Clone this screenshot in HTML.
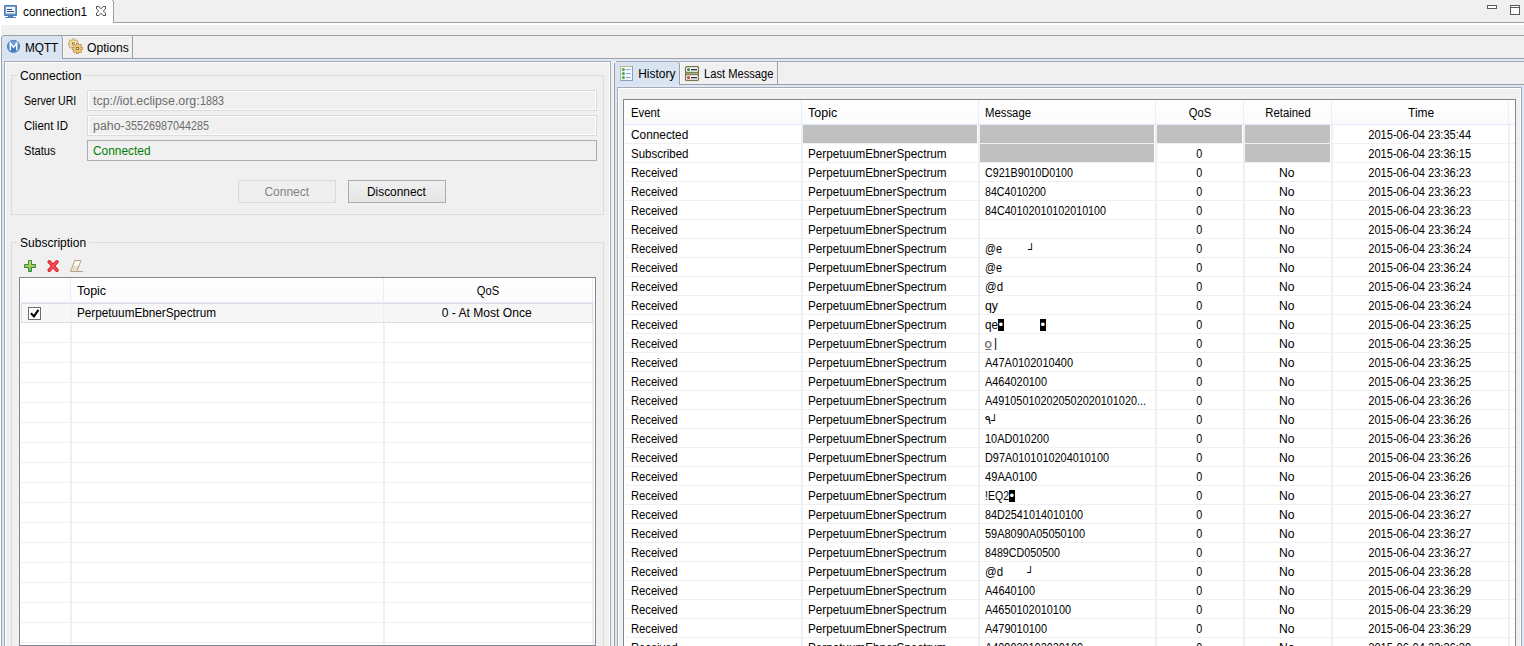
<!DOCTYPE html>
<html><head><meta charset="utf-8"><title>connection1</title>
<style>
html,body{margin:0;padding:0}
body{width:1524px;height:646px;overflow:hidden;background:#f0f0f0;position:relative;font-family:"Liberation Sans", sans-serif;font-size:12px;color:#000}
#root{position:absolute;left:0;top:0;width:1524px;height:646px;overflow:hidden}
#root div{position:absolute;box-sizing:border-box}
#root svg{position:absolute}
.t{position:absolute;white-space:pre;line-height:14px;display:inline-block}
</style></head><body><div id="root">
<div style="left:0px;top:0px;width:113px;height:25px;background:#fff"></div>
<div style="left:112px;top:0px;width:1px;height:1px;background:#f0f0f0"></div>
<div style="left:0px;top:23px;width:1524px;height:2px;background:#fff"></div>
<div style="left:113px;top:1px;width:1px;height:22px;background:#a0a0a0"></div>
<div style="left:112px;top:0px;width:1px;height:1px;background:#a0a0a0"></div>
<div style="left:113px;top:22px;width:1411px;height:1px;background:#a0a0a0"></div>
<div style="left:0px;top:25px;width:1px;height:621px;background:#fff"></div>
<div style="left:1487px;top:5px;width:10px;height:4px;border:1px solid #5a5a5a;background:#fff"></div>
<div style="left:1510px;top:5px;width:10px;height:10px;border:1px solid #5a5a5a;background:#fff"></div>
<div style="left:1510px;top:7px;width:10px;height:1px;background:#5a5a5a"></div>
<div style="left:3px;top:35px;width:1521px;height:1px;background:#a0a0a0"></div>
<div style="left:2px;top:36px;width:1px;height:1px;background:#a0a0a0"></div>
<div style="left:1px;top:37px;width:1px;height:609px;background:#a0a0a0"></div>
<div style="left:62px;top:58px;width:1462px;height:1px;background:#a0a0a0"></div>
<div style="left:2px;top:37px;width:60px;height:22px;background:#d8e4f2"></div>
<div style="left:3px;top:36px;width:58px;height:1px;background:#d8e4f2"></div>
<div style="left:62px;top:37px;width:1px;height:22px;background:#a0a0a0"></div>
<div style="left:61px;top:36px;width:1px;height:1px;background:#a0a0a0"></div>
<div style="left:62px;top:36px;width:70px;height:1px;background:#f8f8f8"></div>
<div style="left:63px;top:37px;width:1px;height:21px;background:#f8f8f8"></div>
<div style="left:132px;top:36px;width:1px;height:22px;background:#a0a0a0"></div>
<div style="left:2px;top:59px;width:1522px;height:2px;background:#dce8f7"></div>
<div style="left:2px;top:59px;width:2px;height:587px;background:#dce8f7"></div>
<div style="left:616px;top:61px;width:908px;height:1px;background:#a8aab2"></div>
<div style="left:615px;top:62px;width:1px;height:1px;background:#a8aab2"></div>
<div style="left:4px;top:61px;width:1px;height:585px;background:#a8aab2"></div>
<div style="left:5px;top:62px;width:605px;height:1px;background:#fff"></div>
<div style="left:4px;top:61px;width:607px;height:1px;background:#a8aab2"></div>
<div style="left:5px;top:62px;width:1px;height:584px;background:#fff"></div>
<div style="left:609px;top:62px;width:1px;height:584px;background:#fff"></div>
<div style="left:610px;top:61px;width:1px;height:585px;background:#a8aab2"></div>
<div style="left:11px;top:75px;width:593px;height:140px;border:1px solid #dcdcdc"></div>
<div style="left:17px;top:70px;width:66px;height:12px;background:#f0f0f0"></div>
<div style="left:87px;top:90px;width:510px;height:21px;border:1px solid #dadada;background:#f0f0f0;box-shadow:inset 0 0 0 1px #fdfdfd"></div>
<div style="left:87px;top:115px;width:510px;height:21px;border:1px solid #dadada;background:#f0f0f0;box-shadow:inset 0 0 0 1px #fdfdfd"></div>
<div style="left:87px;top:140px;width:510px;height:21px;border:1px solid #abadb3;background:#f0f0f0"></div>
<div style="left:238px;top:180px;width:98px;height:23px;border:1px solid #d9d9d9;background:#efefef"></div>
<div style="left:348px;top:180px;width:98px;height:23px;border:1px solid #acacac;background:linear-gradient(#f0f0f0,#e5e5e5)"></div>
<div style="left:11px;top:242px;width:593px;height:420px;border:1px solid #dcdcdc"></div>
<div style="left:17px;top:237px;width:72px;height:12px;background:#f0f0f0"></div>
<div style="left:19px;top:277px;width:577px;height:369px;border:1px solid #828790;background:#fff"></div>
<div style="left:20px;top:278px;width:575px;height:24px;background:linear-gradient(#fefefe,#fbfbfb)"></div>
<div style="left:21px;top:302px;width:574px;height:1px;background:#e1ebfa"></div>
<div style="left:70px;top:278px;width:1px;height:25px;background:#e6eefa"></div>
<div style="left:70px;top:303px;width:1px;height:342px;background:#e8effa"></div>
<div style="left:71px;top:303px;width:1px;height:342px;background:#f0f0f0"></div>
<div style="left:383px;top:278px;width:1px;height:25px;background:#e6eefa"></div>
<div style="left:383px;top:303px;width:1px;height:342px;background:#e8effa"></div>
<div style="left:384px;top:303px;width:1px;height:342px;background:#f0f0f0"></div>
<div style="left:592px;top:278px;width:1px;height:25px;background:#e6eefa"></div>
<div style="left:592px;top:303px;width:1px;height:342px;background:#e8effa"></div>
<div style="left:593px;top:303px;width:1px;height:342px;background:#f0f0f0"></div>
<div style="left:21px;top:322px;width:574px;height:1px;background:#f0f0f0"></div>
<div style="left:21px;top:342px;width:574px;height:1px;background:#f0f0f0"></div>
<div style="left:21px;top:362px;width:574px;height:1px;background:#f0f0f0"></div>
<div style="left:21px;top:382px;width:574px;height:1px;background:#f0f0f0"></div>
<div style="left:21px;top:402px;width:574px;height:1px;background:#f0f0f0"></div>
<div style="left:21px;top:422px;width:574px;height:1px;background:#f0f0f0"></div>
<div style="left:21px;top:442px;width:574px;height:1px;background:#f0f0f0"></div>
<div style="left:21px;top:462px;width:574px;height:1px;background:#f0f0f0"></div>
<div style="left:21px;top:482px;width:574px;height:1px;background:#f0f0f0"></div>
<div style="left:21px;top:502px;width:574px;height:1px;background:#f0f0f0"></div>
<div style="left:21px;top:522px;width:574px;height:1px;background:#f0f0f0"></div>
<div style="left:21px;top:542px;width:574px;height:1px;background:#f0f0f0"></div>
<div style="left:21px;top:562px;width:574px;height:1px;background:#f0f0f0"></div>
<div style="left:21px;top:582px;width:574px;height:1px;background:#f0f0f0"></div>
<div style="left:21px;top:602px;width:574px;height:1px;background:#f0f0f0"></div>
<div style="left:21px;top:622px;width:574px;height:1px;background:#f0f0f0"></div>
<div style="left:21px;top:642px;width:574px;height:1px;background:#f0f0f0"></div>
<div style="left:21px;top:303px;width:572px;height:20px;border:1px solid #dedede;background:#f7f7f7"></div>
<div style="left:70px;top:304px;width:1px;height:18px;background:#e8effa"></div>
<div style="left:383px;top:304px;width:1px;height:18px;background:#e8effa"></div>
<div style="left:28px;top:307px;width:13px;height:13px;border:1px solid #707070;background:#fff"></div>
<svg style="left:28px;top:307px" width="13" height="13" viewBox="0 0 13 13"><path d="M2.9 6.2 L6 9.3 L10.4 2.9" fill="none" stroke="#000" stroke-width="2.1"/></svg>
<div style="left:614px;top:63px;width:1px;height:583px;background:#a0a0a0"></div>
<div style="left:615px;top:62px;width:2px;height:584px;background:#dce8f7"></div>
<div style="left:617px;top:87px;width:1px;height:559px;background:#a8aab2"></div>
<div style="left:618px;top:88px;width:1px;height:558px;background:#fff"></div>
<div style="left:615px;top:62px;width:64px;height:25px;background:#d8e4f2"></div>
<div style="left:679px;top:63px;width:1px;height:22px;background:#a0a0a0"></div>
<div style="left:678px;top:62px;width:1px;height:1px;background:#a0a0a0"></div>
<div style="left:679px;top:62px;width:98px;height:1px;background:#f8f8f8"></div>
<div style="left:680px;top:63px;width:1px;height:21px;background:#f8f8f8"></div>
<div style="left:777px;top:62px;width:1px;height:22px;background:#a0a0a0"></div>
<div style="left:679px;top:84px;width:845px;height:1px;background:#a0a0a0"></div>
<div style="left:615px;top:85px;width:909px;height:2px;background:#dce8f7"></div>
<div style="left:617px;top:87px;width:905px;height:1px;background:#a8aab2"></div>
<div style="left:618px;top:88px;width:903px;height:1px;background:#fff"></div>
<div style="left:1520px;top:88px;width:1px;height:558px;background:#fff"></div>
<div style="left:1521px;top:87px;width:1px;height:559px;background:#a8aab2"></div>
<div style="left:1522px;top:85px;width:2px;height:561px;background:#dce8f7"></div>
<div style="left:623px;top:99px;width:893px;height:560px;border:1px solid #828790;background:#fff"></div>
<div style="left:624px;top:100px;width:891px;height:24px;background:linear-gradient(#fefefe,#fbfbfb)"></div>
<div style="left:624px;top:124px;width:891px;height:1px;background:#e1ebfa"></div>
<div style="left:801px;top:100px;width:1px;height:25px;background:#e6eefa"></div>
<div style="left:801px;top:125px;width:1px;height:521px;background:#e8effa"></div>
<div style="left:802px;top:125px;width:1px;height:521px;background:#f0f0f0"></div>
<div style="left:978px;top:100px;width:1px;height:25px;background:#e6eefa"></div>
<div style="left:978px;top:125px;width:1px;height:521px;background:#e8effa"></div>
<div style="left:979px;top:125px;width:1px;height:521px;background:#f0f0f0"></div>
<div style="left:1155px;top:100px;width:1px;height:25px;background:#e6eefa"></div>
<div style="left:1155px;top:125px;width:1px;height:521px;background:#e8effa"></div>
<div style="left:1156px;top:125px;width:1px;height:521px;background:#f0f0f0"></div>
<div style="left:1243px;top:100px;width:1px;height:25px;background:#e6eefa"></div>
<div style="left:1243px;top:125px;width:1px;height:521px;background:#e8effa"></div>
<div style="left:1244px;top:125px;width:1px;height:521px;background:#f0f0f0"></div>
<div style="left:1331px;top:100px;width:1px;height:25px;background:#e6eefa"></div>
<div style="left:1331px;top:125px;width:1px;height:521px;background:#e8effa"></div>
<div style="left:1332px;top:125px;width:1px;height:521px;background:#f0f0f0"></div>
<div style="left:1508px;top:100px;width:1px;height:25px;background:#e6eefa"></div>
<div style="left:1508px;top:125px;width:1px;height:521px;background:#e8effa"></div>
<div style="left:1509px;top:125px;width:1px;height:521px;background:#f0f0f0"></div>
<div style="left:625px;top:143px;width:890px;height:1px;background:#f0f0f0"></div>
<div style="left:625px;top:162px;width:890px;height:1px;background:#f0f0f0"></div>
<div style="left:625px;top:181px;width:890px;height:1px;background:#f0f0f0"></div>
<div style="left:625px;top:200px;width:890px;height:1px;background:#f0f0f0"></div>
<div style="left:625px;top:219px;width:890px;height:1px;background:#f0f0f0"></div>
<div style="left:625px;top:238px;width:890px;height:1px;background:#f0f0f0"></div>
<div style="left:625px;top:257px;width:890px;height:1px;background:#f0f0f0"></div>
<div style="left:625px;top:276px;width:890px;height:1px;background:#f0f0f0"></div>
<div style="left:625px;top:295px;width:890px;height:1px;background:#f0f0f0"></div>
<div style="left:625px;top:314px;width:890px;height:1px;background:#f0f0f0"></div>
<div style="left:625px;top:333px;width:890px;height:1px;background:#f0f0f0"></div>
<div style="left:625px;top:352px;width:890px;height:1px;background:#f0f0f0"></div>
<div style="left:625px;top:371px;width:890px;height:1px;background:#f0f0f0"></div>
<div style="left:625px;top:390px;width:890px;height:1px;background:#f0f0f0"></div>
<div style="left:625px;top:409px;width:890px;height:1px;background:#f0f0f0"></div>
<div style="left:625px;top:428px;width:890px;height:1px;background:#f0f0f0"></div>
<div style="left:625px;top:447px;width:890px;height:1px;background:#f0f0f0"></div>
<div style="left:625px;top:466px;width:890px;height:1px;background:#f0f0f0"></div>
<div style="left:625px;top:485px;width:890px;height:1px;background:#f0f0f0"></div>
<div style="left:625px;top:504px;width:890px;height:1px;background:#f0f0f0"></div>
<div style="left:625px;top:523px;width:890px;height:1px;background:#f0f0f0"></div>
<div style="left:625px;top:542px;width:890px;height:1px;background:#f0f0f0"></div>
<div style="left:625px;top:561px;width:890px;height:1px;background:#f0f0f0"></div>
<div style="left:625px;top:580px;width:890px;height:1px;background:#f0f0f0"></div>
<div style="left:625px;top:599px;width:890px;height:1px;background:#f0f0f0"></div>
<div style="left:625px;top:618px;width:890px;height:1px;background:#f0f0f0"></div>
<div style="left:625px;top:637px;width:890px;height:1px;background:#f0f0f0"></div>
<div style="left:625px;top:656px;width:890px;height:1px;background:#f0f0f0"></div>
<div style="left:803px;top:125px;width:174px;height:18px;background:#c0c0c0"></div>
<div style="left:980px;top:125px;width:174px;height:18px;background:#c0c0c0"></div>
<div style="left:1157px;top:125px;width:85px;height:18px;background:#c0c0c0"></div>
<div style="left:1245px;top:125px;width:85px;height:18px;background:#c0c0c0"></div>
<div style="left:980px;top:144px;width:174px;height:18px;background:#c0c0c0"></div>
<div style="left:1245px;top:144px;width:85px;height:18px;background:#c0c0c0"></div>
<div style="left:998px;top:319px;width:6px;height:12px;background:#000;color:#fff;font-size:13px;line-height:11px;text-align:center;overflow:hidden"><span style="position:absolute;left:0.6px;top:0.4px">•</span></div>
<div style="left:1040px;top:319px;width:6px;height:12px;background:#000;color:#fff;font-size:13px;line-height:11px;text-align:center;overflow:hidden"><span style="position:absolute;left:0.6px;top:0.4px">•</span></div>
<div style="left:1009px;top:490px;width:6px;height:12px;background:#000;color:#fff;font-size:13px;line-height:11px;text-align:center;overflow:hidden"><span style="position:absolute;left:0.6px;top:0.4px">•</span></div>
<svg style="left:0;top:0" width="24" height="24" viewBox="0 0 24 24">
<rect x="4" y="5" width="13" height="11" rx="0.7" fill="#4a80c6"/>
<rect x="5.5" y="6.5" width="10" height="7.5" fill="#ecf8ff" stroke="#8798b8" stroke-width="1"/>
<rect x="7" y="9" width="5" height="1" fill="#3d4c8c"/>
<rect x="7" y="11" width="7" height="1" fill="#3d4c8c"/>
<rect x="8" y="16" width="5" height="1" fill="#4a80c6"/>
<rect x="5" y="17" width="11" height="1" rx="0.5" fill="#4a80c6"/>
</svg>
<svg style="left:94px;top:4px" width="14" height="14" viewBox="0 0 14 14">
<path d="M2.5 2.5 H5 L7 4.8 L9 2.5 H11.5 V5 L9.2 7 L11.5 9 V11.5 H9 L7 9.2 L5 11.5 H2.5 V9 L4.8 7 L2.5 5 Z" fill="#fff" stroke="#555" stroke-width="1" stroke-linejoin="miter"/>
</svg>
<svg style="left:6px;top:39px" width="15" height="15" viewBox="0 0 15 15">
<defs><linearGradient id="mg" x1="0" y1="0" x2="0" y2="1"><stop offset="0" stop-color="#86aedb"/><stop offset="0.55" stop-color="#4a82c0"/><stop offset="1" stop-color="#3b76b6"/></linearGradient></defs>
<circle cx="7.5" cy="7.4" r="6.6" fill="#558bc4"/>
<circle cx="7.5" cy="7.4" r="5.0" fill="url(#mg)"/>
<path d="M4.3 11.2 V4.1 L7.5 8.2 L10.7 4.1 V11.2" fill="none" stroke="#fff" stroke-width="1.5" stroke-linejoin="miter"/>
</svg>
<svg style="left:62px;top:36px" width="24" height="24" viewBox="0 0 24 24">
<g transform="translate(11.5,8)" opacity="1"><g fill="#bd8f70"><rect x="-1.35" y="-5.50" width="2.7" height="5.50" transform="rotate(0)"/><rect x="-1.35" y="-5.50" width="2.7" height="5.50" transform="rotate(45)"/><rect x="-1.35" y="-5.50" width="2.7" height="5.50" transform="rotate(90)"/><rect x="-1.35" y="-5.50" width="2.7" height="5.50" transform="rotate(135)"/><rect x="-1.35" y="-5.50" width="2.7" height="5.50" transform="rotate(180)"/><rect x="-1.35" y="-5.50" width="2.7" height="5.50" transform="rotate(225)"/><rect x="-1.35" y="-5.50" width="2.7" height="5.50" transform="rotate(270)"/><rect x="-1.35" y="-5.50" width="2.7" height="5.50" transform="rotate(315)"/><circle r="4.00"/></g><g fill="#f7e48c"><rect x="-0.75" y="-4.95" width="1.5" height="4.95" transform="rotate(0)"/><rect x="-0.75" y="-4.95" width="1.5" height="4.95" transform="rotate(45)"/><rect x="-0.75" y="-4.95" width="1.5" height="4.95" transform="rotate(90)"/><rect x="-0.75" y="-4.95" width="1.5" height="4.95" transform="rotate(135)"/><rect x="-0.75" y="-4.95" width="1.5" height="4.95" transform="rotate(180)"/><rect x="-0.75" y="-4.95" width="1.5" height="4.95" transform="rotate(225)"/><rect x="-0.75" y="-4.95" width="1.5" height="4.95" transform="rotate(270)"/><rect x="-0.75" y="-4.95" width="1.5" height="4.95" transform="rotate(315)"/><circle r="3.40"/></g><circle r="1.75" fill="#6a5648"/><circle r="0.85" fill="#fff"/></g>
<circle cx="15.4" cy="12.5" r="5.9" fill="#f4f4f4" opacity="0.85"/>
<g transform="translate(15.4,12.5)" opacity="1.0"><g fill="#a5745a"><rect x="-1.35" y="-5.50" width="2.7" height="5.50" transform="rotate(0)"/><rect x="-1.35" y="-5.50" width="2.7" height="5.50" transform="rotate(45)"/><rect x="-1.35" y="-5.50" width="2.7" height="5.50" transform="rotate(90)"/><rect x="-1.35" y="-5.50" width="2.7" height="5.50" transform="rotate(135)"/><rect x="-1.35" y="-5.50" width="2.7" height="5.50" transform="rotate(180)"/><rect x="-1.35" y="-5.50" width="2.7" height="5.50" transform="rotate(225)"/><rect x="-1.35" y="-5.50" width="2.7" height="5.50" transform="rotate(270)"/><rect x="-1.35" y="-5.50" width="2.7" height="5.50" transform="rotate(315)"/><circle r="4.00"/></g><g fill="#f3cf66"><rect x="-0.75" y="-4.95" width="1.5" height="4.95" transform="rotate(0)"/><rect x="-0.75" y="-4.95" width="1.5" height="4.95" transform="rotate(45)"/><rect x="-0.75" y="-4.95" width="1.5" height="4.95" transform="rotate(90)"/><rect x="-0.75" y="-4.95" width="1.5" height="4.95" transform="rotate(135)"/><rect x="-0.75" y="-4.95" width="1.5" height="4.95" transform="rotate(180)"/><rect x="-0.75" y="-4.95" width="1.5" height="4.95" transform="rotate(225)"/><rect x="-0.75" y="-4.95" width="1.5" height="4.95" transform="rotate(270)"/><rect x="-0.75" y="-4.95" width="1.5" height="4.95" transform="rotate(315)"/><circle r="3.40"/></g><circle r="1.75" fill="#6a5648"/><circle r="0.85" fill="#fff"/></g>
</svg>
<svg style="left:22px;top:258px" width="16" height="16" viewBox="0 0 16 16">
<defs><linearGradient id="pg" x1="0" y1="0" x2="0" y2="1"><stop offset="0" stop-color="#d8e050"/><stop offset="1" stop-color="#7fb83c"/></linearGradient></defs>
<path d="M6.5 2.5 H9.5 V6.5 H13.5 V9.5 H9.5 V13.5 H6.5 V9.5 H2.5 V6.5 H6.5 Z" fill="url(#pg)" stroke="#2f8a4e" stroke-width="1"/>
</svg>
<svg style="left:45px;top:258px" width="16" height="16" viewBox="0 0 16 16">
<path d="M4.2 3.8 L12 12.2 M12 3.8 L4.2 12.2" stroke="#e0202c" stroke-width="3.6" stroke-linecap="round"/>
<path d="M4.4 4 L11.8 12 M11.8 4 L4.4 12" stroke="#f05a60" stroke-width="1.6" stroke-linecap="round"/>
</svg>
<svg style="left:68px;top:258px" width="16" height="16" viewBox="0 0 16 16">
<path d="M6.8 2.5 H12.8 L9 13.5 H2.5 Z" fill="#eadfce" stroke="#b7a47f" stroke-width="1"/>
<path d="M7.2 3.2 H11.9 L10.6 7.4 H5.6 Z" fill="#fdfcf9"/>
<rect x="9" y="13" width="6" height="1" fill="#b7a47f"/>
</svg>
<svg style="left:619px;top:65px" width="16" height="17" viewBox="0 0 16 17">
<rect x="1.5" y="1.5" width="12" height="14" fill="#effaff" stroke="#8f9cc4"/>
<path d="M1.5 15.5 V1.5 H13.5" fill="none" stroke="#c4b484"/>
<g fill="#48b050" stroke="#2c8a3a" stroke-width="0.7"><circle cx="4.4" cy="4.6" r="1.15"/><circle cx="4.4" cy="8.6" r="1.15"/><circle cx="4.4" cy="12.6" r="1.15"/></g>
<g fill="#8f9ccb"><rect x="7" y="4.1" width="4.6" height="1"/><rect x="7" y="8.1" width="4.6" height="1"/><rect x="7" y="12.1" width="4.6" height="1"/></g>
</svg>
<svg style="left:684px;top:65px" width="16" height="17" viewBox="0 0 16 17">
<rect x="1" y="1" width="14" height="15" rx="1.6" fill="#74744c"/>
<rect x="2" y="7.8" width="12" height="1.4" fill="#a9a986"/>
<rect x="2.2" y="2.2" width="11.6" height="4.6" rx="0.6" fill="#fff"/>
<rect x="2.2" y="10.2" width="11.6" height="4.6" rx="0.6" fill="#fff"/>
<circle cx="4.5" cy="4.6" r="1.5" fill="#2f8f38"/>
<rect x="3.2" y="11.2" width="2.7" height="2.7" fill="#e8402a"/>
<rect x="7" y="4" width="6" height="1.3" fill="#2c2c4c"/>
<rect x="7" y="12" width="6" height="1.3" fill="#2c2c4c"/>
</svg>
<span class="t" style="left:22.80px;top:5.03px;transform:scaleX(0.9904);transform-origin:left center;">connection1</span>
<span class="t" style="left:25.00px;top:41.03px;transform:scaleX(0.9794);transform-origin:left center;">MQTT</span>
<span class="t" style="left:87.40px;top:41.03px;transform:scaleX(1.0107);transform-origin:left center;">Options</span>
<span class="t" style="left:20.40px;top:68.73px;transform:scaleX(1.0112);transform-origin:left center;">Connection</span>
<span class="t" style="left:24.20px;top:93.83px;transform:scaleX(0.8813);transform-origin:left center;">Server URI</span>
<span class="t" style="left:24.20px;top:118.73px;transform:scaleX(0.9584);transform-origin:left center;">Client ID</span>
<span class="t" style="left:24.20px;top:143.53px;transform:scaleX(0.9256);transform-origin:left center;">Status</span>
<span class="t" style="left:93.00px;top:93.83px;color:#6d6d6d;transform:scaleX(1.0320);transform-origin:left center;">tcp://iot.eclipse.org:</span>
<span class="t" style="left:199.70px;top:93.83px;color:#6d6d6d;transform:scaleX(0.8988);transform-origin:left center;">1883</span>
<span class="t" style="left:93.00px;top:118.73px;color:#6d6d6d;transform:scaleX(1.0325);transform-origin:left center;">paho-</span>
<span class="t" style="left:124.70px;top:118.73px;color:#6d6d6d;transform:scaleX(0.8990);transform-origin:left center;">35526987044285</span>
<span class="t" style="left:93.00px;top:143.53px;color:#008000;transform:scaleX(0.9906);transform-origin:left center;">Connected</span>
<span class="t" style="left:264.40px;top:184.73px;color:#838383;">Connect</span>
<span class="t" style="left:367.20px;top:184.73px;transform:scaleX(0.9903);transform-origin:left center;">Disconnect</span>
<span class="t" style="left:20.10px;top:235.73px;">Subscription</span>
<span class="t" style="left:77.00px;top:283.73px;transform:scaleX(1.0387);transform-origin:left center;">Topic</span>
<span class="t" style="left:475.99px;top:283.73px;transform:scaleX(0.9327);transform-origin:center center;">QoS</span>
<span class="t" style="left:76.90px;top:306.33px;transform:scaleX(0.9783);transform-origin:left center;">PerpetuumEbnerSpectrum</span>
<span class="t" style="left:442.41px;top:306.33px;transform:scaleX(1.0070);transform-origin:center center;">0 - At Most Once</span>
<span class="t" style="left:638.20px;top:66.63px;">History</span>
<span class="t" style="left:703.90px;top:66.63px;transform:scaleX(0.9288);transform-origin:left center;">Last Message</span>
<span class="t" style="left:631.30px;top:105.93px;transform:scaleX(0.9450);transform-origin:left center;">Event</span>
<span class="t" style="left:808.40px;top:105.93px;transform:scaleX(1.0423);transform-origin:left center;">Topic</span>
<span class="t" style="left:985.00px;top:105.93px;transform:scaleX(0.9445);transform-origin:left center;">Message</span>
<span class="t" style="left:1187.99px;top:105.93px;transform:scaleX(0.9286);transform-origin:center center;">QoS</span>
<span class="t" style="left:1263.98px;top:105.93px;transform:scaleX(0.9470);transform-origin:center center;">Retained</span>
<span class="t" style="left:1407.88px;top:105.93px;transform:scaleX(0.9949);transform-origin:center center;">Time</span>
<span class="t" style="left:631.30px;top:127.53px;transform:scaleX(0.9871);transform-origin:left center;">Connected</span>
<span class="t" style="left:1363.68px;top:127.53px;transform:scaleX(0.9243);transform-origin:center center;">2015-06-04 23:35:44</span>
<span class="t" style="left:631.30px;top:146.53px;transform:scaleX(0.9576);transform-origin:left center;">Subscribed</span>
<span class="t" style="left:808.40px;top:146.53px;transform:scaleX(0.9755);transform-origin:left center;">PerpetuumEbnerSpectrum</span>
<span class="t" style="left:1196.16px;top:146.53px;transform:scaleX(0.8972);transform-origin:center center;">0</span>
<span class="t" style="left:1363.68px;top:146.53px;transform:scaleX(0.9243);transform-origin:center center;">2015-06-04 23:36:15</span>
<span class="t" style="left:631.30px;top:165.53px;transform:scaleX(0.9314);transform-origin:left center;">Received</span>
<span class="t" style="left:808.40px;top:165.53px;transform:scaleX(0.9755);transform-origin:left center;">PerpetuumEbnerSpectrum</span>
<span class="t" style="left:985.20px;top:165.53px;transform:scaleX(0.8911);transform-origin:left center;">C921B9010D0100</span>
<span class="t" style="left:1196.16px;top:165.53px;transform:scaleX(0.8972);transform-origin:center center;">0</span>
<span class="t" style="left:1279.33px;top:165.53px;transform:scaleX(1.0102);transform-origin:center center;">No</span>
<span class="t" style="left:1363.68px;top:165.53px;transform:scaleX(0.9243);transform-origin:center center;">2015-06-04 23:36:23</span>
<span class="t" style="left:631.30px;top:184.53px;transform:scaleX(0.9314);transform-origin:left center;">Received</span>
<span class="t" style="left:808.40px;top:184.53px;transform:scaleX(0.9755);transform-origin:left center;">PerpetuumEbnerSpectrum</span>
<span class="t" style="left:985.20px;top:184.53px;transform:scaleX(0.8875);transform-origin:left center;">84C4010200</span>
<span class="t" style="left:1196.16px;top:184.53px;transform:scaleX(0.8972);transform-origin:center center;">0</span>
<span class="t" style="left:1279.33px;top:184.53px;transform:scaleX(1.0102);transform-origin:center center;">No</span>
<span class="t" style="left:1363.68px;top:184.53px;transform:scaleX(0.9243);transform-origin:center center;">2015-06-04 23:36:23</span>
<span class="t" style="left:631.30px;top:203.53px;transform:scaleX(0.9314);transform-origin:left center;">Received</span>
<span class="t" style="left:808.40px;top:203.53px;transform:scaleX(0.9755);transform-origin:left center;">PerpetuumEbnerSpectrum</span>
<span class="t" style="left:985.20px;top:203.53px;transform:scaleX(0.8932);transform-origin:left center;">84C40102010102010100</span>
<span class="t" style="left:1196.16px;top:203.53px;transform:scaleX(0.8972);transform-origin:center center;">0</span>
<span class="t" style="left:1279.33px;top:203.53px;transform:scaleX(1.0102);transform-origin:center center;">No</span>
<span class="t" style="left:1363.68px;top:203.53px;transform:scaleX(0.9243);transform-origin:center center;">2015-06-04 23:36:23</span>
<span class="t" style="left:631.30px;top:222.53px;transform:scaleX(0.9314);transform-origin:left center;">Received</span>
<span class="t" style="left:808.40px;top:222.53px;transform:scaleX(0.9755);transform-origin:left center;">PerpetuumEbnerSpectrum</span>
<span class="t" style="left:1196.16px;top:222.53px;transform:scaleX(0.8972);transform-origin:center center;">0</span>
<span class="t" style="left:1279.33px;top:222.53px;transform:scaleX(1.0102);transform-origin:center center;">No</span>
<span class="t" style="left:1363.68px;top:222.53px;transform:scaleX(0.9243);transform-origin:center center;">2015-06-04 23:36:24</span>
<span class="t" style="left:631.30px;top:241.53px;transform:scaleX(0.9314);transform-origin:left center;">Received</span>
<span class="t" style="left:808.40px;top:241.53px;transform:scaleX(0.9755);transform-origin:left center;">PerpetuumEbnerSpectrum</span>
<span class="t" style="left:985.20px;top:241.53px;transform:scaleX(0.9014);transform-origin:left center;">@e</span>
<span class="t" style="left:1028.00px;top:243.06px;font-size:11px;font-family:'DejaVu Sans',sans-serif;">┘</span>
<span class="t" style="left:1196.16px;top:241.53px;transform:scaleX(0.8972);transform-origin:center center;">0</span>
<span class="t" style="left:1279.33px;top:241.53px;transform:scaleX(1.0102);transform-origin:center center;">No</span>
<span class="t" style="left:1363.68px;top:241.53px;transform:scaleX(0.9243);transform-origin:center center;">2015-06-04 23:36:24</span>
<span class="t" style="left:631.30px;top:260.53px;transform:scaleX(0.9314);transform-origin:left center;">Received</span>
<span class="t" style="left:808.40px;top:260.53px;transform:scaleX(0.9755);transform-origin:left center;">PerpetuumEbnerSpectrum</span>
<span class="t" style="left:985.20px;top:260.53px;transform:scaleX(0.9014);transform-origin:left center;">@e</span>
<span class="t" style="left:1196.16px;top:260.53px;transform:scaleX(0.8972);transform-origin:center center;">0</span>
<span class="t" style="left:1279.33px;top:260.53px;transform:scaleX(1.0102);transform-origin:center center;">No</span>
<span class="t" style="left:1363.68px;top:260.53px;transform:scaleX(0.9243);transform-origin:center center;">2015-06-04 23:36:24</span>
<span class="t" style="left:631.30px;top:279.53px;transform:scaleX(0.9314);transform-origin:left center;">Received</span>
<span class="t" style="left:808.40px;top:279.53px;transform:scaleX(0.9755);transform-origin:left center;">PerpetuumEbnerSpectrum</span>
<span class="t" style="left:985.20px;top:279.53px;transform:scaleX(0.9544);transform-origin:left center;">@d</span>
<span class="t" style="left:1196.16px;top:279.53px;transform:scaleX(0.8972);transform-origin:center center;">0</span>
<span class="t" style="left:1279.33px;top:279.53px;transform:scaleX(1.0102);transform-origin:center center;">No</span>
<span class="t" style="left:1363.68px;top:279.53px;transform:scaleX(0.9243);transform-origin:center center;">2015-06-04 23:36:24</span>
<span class="t" style="left:631.30px;top:298.53px;transform:scaleX(0.9314);transform-origin:left center;">Received</span>
<span class="t" style="left:808.40px;top:298.53px;transform:scaleX(0.9755);transform-origin:left center;">PerpetuumEbnerSpectrum</span>
<span class="t" style="left:985.20px;top:298.53px;transform:scaleX(1.0246);transform-origin:left center;">qy</span>
<span class="t" style="left:1196.16px;top:298.53px;transform:scaleX(0.8972);transform-origin:center center;">0</span>
<span class="t" style="left:1279.33px;top:298.53px;transform:scaleX(1.0102);transform-origin:center center;">No</span>
<span class="t" style="left:1363.68px;top:298.53px;transform:scaleX(0.9243);transform-origin:center center;">2015-06-04 23:36:24</span>
<span class="t" style="left:631.30px;top:317.53px;transform:scaleX(0.9314);transform-origin:left center;">Received</span>
<span class="t" style="left:808.40px;top:317.53px;transform:scaleX(0.9755);transform-origin:left center;">PerpetuumEbnerSpectrum</span>
<span class="t" style="left:985.20px;top:317.53px;transform:scaleX(0.9731);transform-origin:left center;">qe</span>
<span class="t" style="left:1196.16px;top:317.53px;transform:scaleX(0.8972);transform-origin:center center;">0</span>
<span class="t" style="left:1279.33px;top:317.53px;transform:scaleX(1.0102);transform-origin:center center;">No</span>
<span class="t" style="left:1363.68px;top:317.53px;transform:scaleX(0.9243);transform-origin:center center;">2015-06-04 23:36:25</span>
<span class="t" style="left:631.30px;top:336.53px;transform:scaleX(0.9314);transform-origin:left center;">Received</span>
<span class="t" style="left:808.40px;top:336.53px;transform:scaleX(0.9755);transform-origin:left center;">PerpetuumEbnerSpectrum</span>
<span class="t" style="left:984.30px;top:340.88px;color:#666;font-size:17px;font-family:'DejaVu Sans',sans-serif;">º</span>
<span class="t" style="left:994.00px;top:336.03px;">|</span>
<span class="t" style="left:1196.16px;top:336.53px;transform:scaleX(0.8972);transform-origin:center center;">0</span>
<span class="t" style="left:1279.33px;top:336.53px;transform:scaleX(1.0102);transform-origin:center center;">No</span>
<span class="t" style="left:1363.68px;top:336.53px;transform:scaleX(0.9243);transform-origin:center center;">2015-06-04 23:36:25</span>
<span class="t" style="left:631.30px;top:355.53px;transform:scaleX(0.9314);transform-origin:left center;">Received</span>
<span class="t" style="left:808.40px;top:355.53px;transform:scaleX(0.9755);transform-origin:left center;">PerpetuumEbnerSpectrum</span>
<span class="t" style="left:985.20px;top:355.53px;transform:scaleX(0.9158);transform-origin:left center;">A47A0102010400</span>
<span class="t" style="left:1196.16px;top:355.53px;transform:scaleX(0.8972);transform-origin:center center;">0</span>
<span class="t" style="left:1279.33px;top:355.53px;transform:scaleX(1.0102);transform-origin:center center;">No</span>
<span class="t" style="left:1363.68px;top:355.53px;transform:scaleX(0.9243);transform-origin:center center;">2015-06-04 23:36:25</span>
<span class="t" style="left:631.30px;top:374.53px;transform:scaleX(0.9314);transform-origin:left center;">Received</span>
<span class="t" style="left:808.40px;top:374.53px;transform:scaleX(0.9755);transform-origin:left center;">PerpetuumEbnerSpectrum</span>
<span class="t" style="left:985.20px;top:374.53px;transform:scaleX(0.9107);transform-origin:left center;">A464020100</span>
<span class="t" style="left:1196.16px;top:374.53px;transform:scaleX(0.8972);transform-origin:center center;">0</span>
<span class="t" style="left:1279.33px;top:374.53px;transform:scaleX(1.0102);transform-origin:center center;">No</span>
<span class="t" style="left:1363.68px;top:374.53px;transform:scaleX(0.9243);transform-origin:center center;">2015-06-04 23:36:25</span>
<span class="t" style="left:631.30px;top:393.53px;transform:scaleX(0.9314);transform-origin:left center;">Received</span>
<span class="t" style="left:808.40px;top:393.53px;transform:scaleX(0.9755);transform-origin:left center;">PerpetuumEbnerSpectrum</span>
<span class="t" style="left:985.20px;top:393.53px;transform:scaleX(0.9035);transform-origin:left center;">A491050102020502020101020...</span>
<span class="t" style="left:1196.16px;top:393.53px;transform:scaleX(0.8972);transform-origin:center center;">0</span>
<span class="t" style="left:1279.33px;top:393.53px;transform:scaleX(1.0102);transform-origin:center center;">No</span>
<span class="t" style="left:1363.68px;top:393.53px;transform:scaleX(0.9243);transform-origin:center center;">2015-06-04 23:36:26</span>
<span class="t" style="left:631.30px;top:412.53px;transform:scaleX(0.9314);transform-origin:left center;">Received</span>
<span class="t" style="left:808.40px;top:412.53px;transform:scaleX(0.9755);transform-origin:left center;">PerpetuumEbnerSpectrum</span>
<span class="t" style="left:984.80px;top:413.03px;font-family:'DejaVu Sans',sans-serif;">٩</span>
<span class="t" style="left:991.00px;top:414.06px;font-size:11px;font-family:'DejaVu Sans',sans-serif;">┘</span>
<span class="t" style="left:1196.16px;top:412.53px;transform:scaleX(0.8972);transform-origin:center center;">0</span>
<span class="t" style="left:1279.33px;top:412.53px;transform:scaleX(1.0102);transform-origin:center center;">No</span>
<span class="t" style="left:1363.68px;top:412.53px;transform:scaleX(0.9243);transform-origin:center center;">2015-06-04 23:36:26</span>
<span class="t" style="left:631.30px;top:431.53px;transform:scaleX(0.9314);transform-origin:left center;">Received</span>
<span class="t" style="left:808.40px;top:431.53px;transform:scaleX(0.9755);transform-origin:left center;">PerpetuumEbnerSpectrum</span>
<span class="t" style="left:985.20px;top:431.53px;transform:scaleX(0.9135);transform-origin:left center;">10AD010200</span>
<span class="t" style="left:1196.16px;top:431.53px;transform:scaleX(0.8972);transform-origin:center center;">0</span>
<span class="t" style="left:1279.33px;top:431.53px;transform:scaleX(1.0102);transform-origin:center center;">No</span>
<span class="t" style="left:1363.68px;top:431.53px;transform:scaleX(0.9243);transform-origin:center center;">2015-06-04 23:36:26</span>
<span class="t" style="left:631.30px;top:450.53px;transform:scaleX(0.9314);transform-origin:left center;">Received</span>
<span class="t" style="left:808.40px;top:450.53px;transform:scaleX(0.9755);transform-origin:left center;">PerpetuumEbnerSpectrum</span>
<span class="t" style="left:985.20px;top:450.53px;transform:scaleX(0.9063);transform-origin:left center;">D97A0101010204010100</span>
<span class="t" style="left:1196.16px;top:450.53px;transform:scaleX(0.8972);transform-origin:center center;">0</span>
<span class="t" style="left:1279.33px;top:450.53px;transform:scaleX(1.0102);transform-origin:center center;">No</span>
<span class="t" style="left:1363.68px;top:450.53px;transform:scaleX(0.9243);transform-origin:center center;">2015-06-04 23:36:26</span>
<span class="t" style="left:631.30px;top:469.53px;transform:scaleX(0.9314);transform-origin:left center;">Received</span>
<span class="t" style="left:808.40px;top:469.53px;transform:scaleX(0.9755);transform-origin:left center;">PerpetuumEbnerSpectrum</span>
<span class="t" style="left:985.20px;top:469.53px;transform:scaleX(0.9275);transform-origin:left center;">49AA0100</span>
<span class="t" style="left:1196.16px;top:469.53px;transform:scaleX(0.8972);transform-origin:center center;">0</span>
<span class="t" style="left:1279.33px;top:469.53px;transform:scaleX(1.0102);transform-origin:center center;">No</span>
<span class="t" style="left:1363.68px;top:469.53px;transform:scaleX(0.9243);transform-origin:center center;">2015-06-04 23:36:26</span>
<span class="t" style="left:631.30px;top:488.53px;transform:scaleX(0.9314);transform-origin:left center;">Received</span>
<span class="t" style="left:808.40px;top:488.53px;transform:scaleX(0.9755);transform-origin:left center;">PerpetuumEbnerSpectrum</span>
<span class="t" style="left:985.20px;top:488.53px;transform:scaleX(0.8772);transform-origin:left center;">!EQ2</span>
<span class="t" style="left:1196.16px;top:488.53px;transform:scaleX(0.8972);transform-origin:center center;">0</span>
<span class="t" style="left:1279.33px;top:488.53px;transform:scaleX(1.0102);transform-origin:center center;">No</span>
<span class="t" style="left:1363.68px;top:488.53px;transform:scaleX(0.9243);transform-origin:center center;">2015-06-04 23:36:27</span>
<span class="t" style="left:631.30px;top:507.53px;transform:scaleX(0.9314);transform-origin:left center;">Received</span>
<span class="t" style="left:808.40px;top:507.53px;transform:scaleX(0.9755);transform-origin:left center;">PerpetuumEbnerSpectrum</span>
<span class="t" style="left:985.20px;top:507.53px;transform:scaleX(0.9009);transform-origin:left center;">84D2541014010100</span>
<span class="t" style="left:1196.16px;top:507.53px;transform:scaleX(0.8972);transform-origin:center center;">0</span>
<span class="t" style="left:1279.33px;top:507.53px;transform:scaleX(1.0102);transform-origin:center center;">No</span>
<span class="t" style="left:1363.68px;top:507.53px;transform:scaleX(0.9243);transform-origin:center center;">2015-06-04 23:36:27</span>
<span class="t" style="left:631.30px;top:526.53px;transform:scaleX(0.9314);transform-origin:left center;">Received</span>
<span class="t" style="left:808.40px;top:526.53px;transform:scaleX(0.9755);transform-origin:left center;">PerpetuumEbnerSpectrum</span>
<span class="t" style="left:985.20px;top:526.53px;transform:scaleX(0.9136);transform-origin:left center;">59A8090A05050100</span>
<span class="t" style="left:1196.16px;top:526.53px;transform:scaleX(0.8972);transform-origin:center center;">0</span>
<span class="t" style="left:1279.33px;top:526.53px;transform:scaleX(1.0102);transform-origin:center center;">No</span>
<span class="t" style="left:1363.68px;top:526.53px;transform:scaleX(0.9243);transform-origin:center center;">2015-06-04 23:36:27</span>
<span class="t" style="left:631.30px;top:545.53px;transform:scaleX(0.9314);transform-origin:left center;">Received</span>
<span class="t" style="left:808.40px;top:545.53px;transform:scaleX(0.9755);transform-origin:left center;">PerpetuumEbnerSpectrum</span>
<span class="t" style="left:985.20px;top:545.53px;transform:scaleX(0.8920);transform-origin:left center;">8489CD050500</span>
<span class="t" style="left:1196.16px;top:545.53px;transform:scaleX(0.8972);transform-origin:center center;">0</span>
<span class="t" style="left:1279.33px;top:545.53px;transform:scaleX(1.0102);transform-origin:center center;">No</span>
<span class="t" style="left:1363.68px;top:545.53px;transform:scaleX(0.9243);transform-origin:center center;">2015-06-04 23:36:27</span>
<span class="t" style="left:631.30px;top:564.53px;transform:scaleX(0.9314);transform-origin:left center;">Received</span>
<span class="t" style="left:808.40px;top:564.53px;transform:scaleX(0.9755);transform-origin:left center;">PerpetuumEbnerSpectrum</span>
<span class="t" style="left:985.20px;top:564.53px;transform:scaleX(0.9544);transform-origin:left center;">@d</span>
<span class="t" style="left:1027.00px;top:566.06px;font-size:11px;font-family:'DejaVu Sans',sans-serif;">┘</span>
<span class="t" style="left:1196.16px;top:564.53px;transform:scaleX(0.8972);transform-origin:center center;">0</span>
<span class="t" style="left:1279.33px;top:564.53px;transform:scaleX(1.0102);transform-origin:center center;">No</span>
<span class="t" style="left:1363.68px;top:564.53px;transform:scaleX(0.9243);transform-origin:center center;">2015-06-04 23:36:28</span>
<span class="t" style="left:631.30px;top:583.53px;transform:scaleX(0.9314);transform-origin:left center;">Received</span>
<span class="t" style="left:808.40px;top:583.53px;transform:scaleX(0.9755);transform-origin:left center;">PerpetuumEbnerSpectrum</span>
<span class="t" style="left:985.20px;top:583.53px;transform:scaleX(0.9135);transform-origin:left center;">A4640100</span>
<span class="t" style="left:1196.16px;top:583.53px;transform:scaleX(0.8972);transform-origin:center center;">0</span>
<span class="t" style="left:1279.33px;top:583.53px;transform:scaleX(1.0102);transform-origin:center center;">No</span>
<span class="t" style="left:1363.68px;top:583.53px;transform:scaleX(0.9243);transform-origin:center center;">2015-06-04 23:36:29</span>
<span class="t" style="left:631.30px;top:602.53px;transform:scaleX(0.9314);transform-origin:left center;">Received</span>
<span class="t" style="left:808.40px;top:602.53px;transform:scaleX(0.9755);transform-origin:left center;">PerpetuumEbnerSpectrum</span>
<span class="t" style="left:985.20px;top:602.53px;transform:scaleX(0.9075);transform-origin:left center;">A4650102010100</span>
<span class="t" style="left:1196.16px;top:602.53px;transform:scaleX(0.8972);transform-origin:center center;">0</span>
<span class="t" style="left:1279.33px;top:602.53px;transform:scaleX(1.0102);transform-origin:center center;">No</span>
<span class="t" style="left:1363.68px;top:602.53px;transform:scaleX(0.9243);transform-origin:center center;">2015-06-04 23:36:29</span>
<span class="t" style="left:631.30px;top:621.53px;transform:scaleX(0.9314);transform-origin:left center;">Received</span>
<span class="t" style="left:808.40px;top:621.53px;transform:scaleX(0.9755);transform-origin:left center;">PerpetuumEbnerSpectrum</span>
<span class="t" style="left:985.20px;top:621.53px;transform:scaleX(0.9107);transform-origin:left center;">A479010100</span>
<span class="t" style="left:1196.16px;top:621.53px;transform:scaleX(0.8972);transform-origin:center center;">0</span>
<span class="t" style="left:1279.33px;top:621.53px;transform:scaleX(1.0102);transform-origin:center center;">No</span>
<span class="t" style="left:1363.68px;top:621.53px;transform:scaleX(0.9243);transform-origin:center center;">2015-06-04 23:36:29</span>
<span class="t" style="left:631.30px;top:640.53px;transform:scaleX(0.9314);transform-origin:left center;">Received</span>
<span class="t" style="left:808.40px;top:640.53px;transform:scaleX(0.9755);transform-origin:left center;">PerpetuumEbnerSpectrum</span>
<span class="t" style="left:985.20px;top:640.53px;transform:scaleX(0.9064);transform-origin:left center;">A409020102020100</span>
<span class="t" style="left:1196.16px;top:640.53px;transform:scaleX(0.8972);transform-origin:center center;">0</span>
<span class="t" style="left:1279.33px;top:640.53px;transform:scaleX(1.0102);transform-origin:center center;">No</span>
<span class="t" style="left:1363.68px;top:640.53px;transform:scaleX(0.9243);transform-origin:center center;">2015-06-04 23:36:30</span>
</div></body></html>
